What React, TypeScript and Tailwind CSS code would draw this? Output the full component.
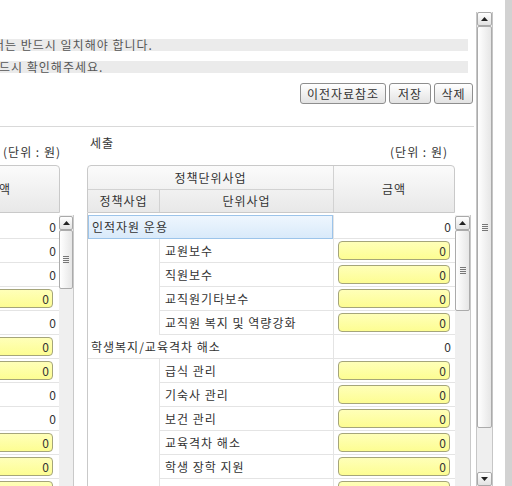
import React from "react";

type Row = { t: string; group?: boolean; sel?: boolean };

const rows: Row[] = [
  { t: "인적자원 운용", group: true, sel: true },
  { t: "교원보수" },
  { t: "직원보수" },
  { t: "교직원기타보수" },
  { t: "교직원 복지 및 역량강화" },
  { t: "학생복지/교육격차 해소", group: true },
  { t: "급식 관리" },
  { t: "기숙사 관리" },
  { t: "보건 관리" },
  { t: "교육격차 해소" },
  { t: "학생 장학 지원" },
  { t: "" },
];

// left (세입) amounts: p = plain, y = yellow input
const leftRows = ["p", "p", "p", "y", "p", "y", "y", "p", "p", "y", "y", "y"];

function Arrow({ down }: { down?: boolean }) {
  return (
    <svg width="7" height="4" viewBox="0 0 7 4">
      <path d={down ? "M0 0H7L3.5 4Z" : "M0 4H7L3.5 0Z"} fill="#222" />
    </svg>
  );
}

function Grip() {
  return (
    <div className="flex flex-col gap-[1px]">
      <div className="w-[6px] h-[1px] bg-[#777]" />
      <div className="w-[6px] h-[1px] bg-[#777]" />
      <div className="w-[6px] h-[1px] bg-[#777]" />
      <div className="w-[6px] h-[1px] bg-[#777]" />
    </div>
  );
}

function ScrollBtn({ down }: { down?: boolean }) {
  return (
    <div className="h-[14px] shrink-0 border border-[#a9a9a9] rounded-[2px] bg-gradient-to-b from-white to-[#e2e2e2] flex items-center justify-center">
      <Arrow down={down} />
    </div>
  );
}

function Thumb({ h }: { h: string }) {
  return (
    <div className={`${h} shrink-0 border border-[#ababab] rounded-[2px] bg-gradient-to-r from-white to-[#e6e6e6] flex items-center justify-center`}>
      <Grip />
    </div>
  );
}

function YellowInput({ w }: { w: string }) {
  return (
    <div className={`${w} h-[19px] rounded-[4px] border border-[#a5a57a] bg-gradient-to-b from-[#ffffb8] to-[#fdfd92] text-right pr-[2px] leading-[17px] text-[#333]`}>
      0
    </div>
  );
}

export default function App() {
  return (
    <div className="w-[512px] h-[486px] overflow-hidden bg-white flex font-['Noto_Sans_CJK_KR','Noto_Sans_CJK_SC',sans-serif] text-[12px] tracking-[1px] text-[#333]">
      {/* main panel */}
      <div className="w-[476px] shrink-0">
        <div className="h-[39px]" />
        <div className="w-[468px] h-[12px] bg-[#ebebeb] text-[#555] leading-[12px] whitespace-nowrap overflow-hidden">
          <span className="-ml-[7px] inline-block">서는 반드시 일치해야 합니다.</span>
        </div>
        <div className="w-[468px] h-[12px] mt-[10px] bg-[#ebebeb] text-[#555] leading-[12px] whitespace-nowrap overflow-hidden">
          <span className="-ml-[1px] inline-block">드시 확인해주세요.</span>
        </div>
        <div className="mt-[10px] h-[21px] flex justify-end gap-[3px] pr-[3px]">
          {[
            ["이전자료참조", "w-[86px]"],
            ["저장", "w-[42px]"],
            ["삭제", "w-[39px]"],
          ].map(([t, w]) => (
            <button
              key={t}
              className={`${w} h-[21px] border border-[#8e8e8e] rounded-[3px] bg-gradient-to-b from-white to-[#e3e3e3] text-[#333] text-[12px] tracking-[1px] leading-[19px]`}
            >
              {t}
            </button>
          ))}
        </div>
        <div className="mt-[22px] h-px w-[474px] bg-[#d9d9d9]" />

        {/* tables */}
        <div className="flex gap-[13px]">
          {/* 세입 (cut off) */}
          <div className="-ml-[62px] w-[136px] shrink-0 flex flex-col">
            <div className="h-[38px] shrink-0 flex items-end justify-end pr-[13px] pb-[6px] leading-[14px] whitespace-nowrap">
              (단위 : 원)
            </div>
            <div className="w-[122px] h-[48px] shrink-0 border border-[#c9c9c9] rounded-t-[4px] bg-gradient-to-b from-[#fbfbfb] to-[#e8e8e8] flex items-center justify-center">
              금액
            </div>
            <div className="flex pt-[2px] h-[300px] shrink-0">
              <div className="w-[121px] flex flex-col">
                {leftRows.map((k, i) => (
                  <div key={i} className="h-[24px] shrink-0 border-b border-[#e4e4e4] flex items-center justify-end">
                    {k === "y" ? (
                      <div className="pr-[6px]">
                        <YellowInput w="w-[112px]" />
                      </div>
                    ) : (
                      <span className="pr-[2px]">0</span>
                    )}
                  </div>
                ))}
              </div>
              <div className="w-[14px] flex flex-col bg-[#efefef] pt-px">
                <ScrollBtn />
                <Thumb h="h-[59px]" />
              </div>
              <div className="w-px bg-[#c9c9c9]" />
            </div>
          </div>

          {/* 세출 */}
          <div className="w-[384px] shrink-0 flex flex-col">
            <div className="h-[38px] shrink-0 flex justify-between w-[368px]">
              <div className="pt-[9px] pl-[3px] leading-[14px]">세출</div>
              <div className="self-end pb-[6px] pr-[7px] leading-[14px]">(단위 : 원)</div>
            </div>
            <div className="w-[368px] h-[48px] shrink-0 border border-[#c9c9c9] rounded-t-[4px] bg-gradient-to-b from-[#fbfbfb] to-[#e8e8e8] flex">
              <div className="w-[245px] flex flex-col">
                <div className="h-[24px] border-b border-[#d2d2d2] flex items-center justify-center">정책단위사업</div>
                <div className="flex-1 flex">
                  <div className="w-[72px] border-r border-[#d2d2d2] flex items-center justify-center">정책사업</div>
                  <div className="flex-1 flex items-center justify-center">단위사업</div>
                </div>
              </div>
              <div className="flex-1 border-l border-[#d2d2d2] flex items-center justify-center">금액</div>
            </div>
            <div className="flex pt-[2px] h-[300px] shrink-0 border-l border-[#c9c9c9]">
              <div className="w-[367px] flex flex-col">
                {rows.map((r, i) =>
                  r.group ? (
                    <div key={i} className="h-[24px] shrink-0 flex">
                      <div
                        className={`w-[245px] flex items-center pl-[3px] whitespace-nowrap ${
                          r.sel
                            ? "border border-[#9cc4ea] bg-gradient-to-b from-[#eef6fe] to-[#d9eafa]"
                            : "border-b border-[#e4e4e4]"
                        }`}
                      >
                        {r.t}
                      </div>
                      <div className="flex-1 border-l border-b border-[#e4e4e4] flex items-center justify-end pr-[3px]">0</div>
                    </div>
                  ) : (
                    <div key={i} className="h-[24px] shrink-0 flex">
                      <div className="w-[71px]" />
                      <div className="w-[174px] border-l border-b border-[#e4e4e4] flex items-center pl-[5px] whitespace-nowrap">
                        {r.t}
                      </div>
                      <div className="flex-1 border-l border-b border-[#e4e4e4] flex items-center justify-end pr-[5px]">
                        <YellowInput w="w-[112px]" />
                      </div>
                    </div>
                  )
                )}
              </div>
              <div className="w-[15px] flex flex-col bg-[#efefef] pt-px">
                <ScrollBtn />
                <Thumb h="h-[81px]" />
              </div>
              <div className="w-px bg-[#c9c9c9]" />
            </div>
          </div>
        </div>
      </div>

      {/* page scrollbar */}
      <div className="w-[17px] shrink-0 pt-[12px]">
        <div className="h-[474px] flex flex-col bg-[#efefef] border-x border-[#c6c6c6]">
          <ScrollBtn />
          <Thumb h="h-[402px]" />
          <div className="flex-1" />
          <ScrollBtn down />
        </div>
      </div>
      <div className="w-[12px] shrink-0" />
      <div className="w-[7px] shrink-0 bg-[#d2d2d2]" />
    </div>
  );
}
